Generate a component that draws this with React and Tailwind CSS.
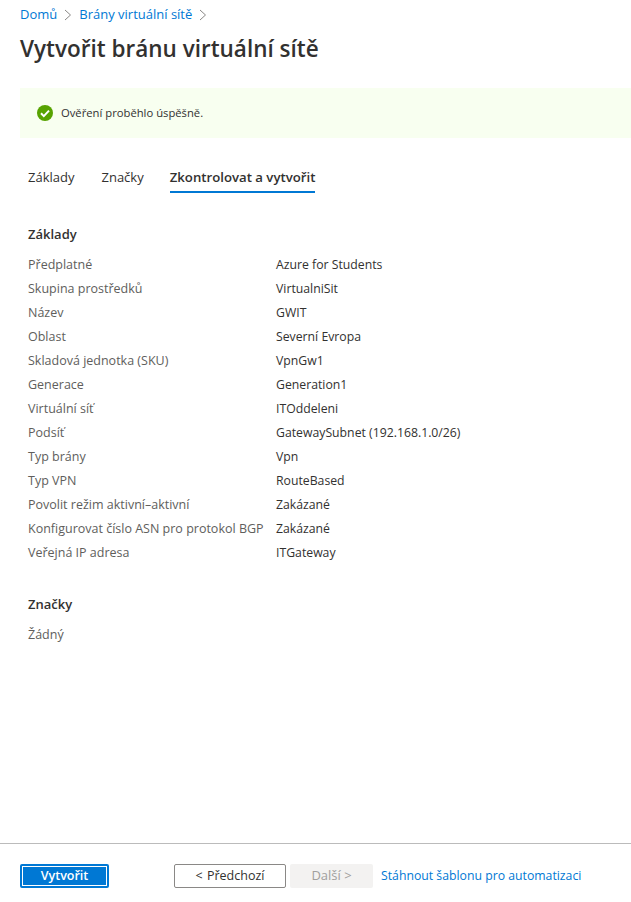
import React from 'react';

const rows = [
  ['Předplatné', 'Azure for Students'],
  ['Skupina prostředků', 'VirtualniSit'],
  ['Název', 'GWIT'],
  ['Oblast', 'Severní Evropa'],
  ['Skladová jednotka (SKU)', 'VpnGw1'],
  ['Generace', 'Generation1'],
  ['Virtuální síť', 'ITOddeleni'],
  ['Podsíť', 'GatewaySubnet (192.168.1.0/26)'],
  ['Typ brány', 'Vpn'],
  ['Typ VPN', 'RouteBased'],
  ['Povolit režim aktivní–aktivní', 'Zakázané'],
  ['Konfigurovat číslo ASN pro protokol BGP', 'Zakázané'],
  ['Veřejná IP adresa', 'ITGateway'],
];

const Chevron = () => (
  <svg width="8" height="12" viewBox="0 0 8 12" fill="none" stroke="#8a8886" strokeWidth="1" className="mx-[7px]">
    <path d="M1 1l5.5 5L1 11" />
  </svg>
);

export default function App() {
  return (
    <div className="relative h-[902px] w-[631px] overflow-hidden bg-white font-['Open_Sans',sans-serif] text-[12.5px] text-[#323130]">
      <div className="pl-5 pt-[6px]">
        <div className="flex h-[18px] items-center text-[13px] text-[#0078d4]">
          <span>Domů</span>
          <Chevron />
          <span>Brány virtuální sítě</span>
          <Chevron />
        </div>
        <h1 className="mt-[8px] text-[22.5px] font-semibold leading-[34px]">Vytvořit bránu virtuální sítě</h1>
      </div>

      <div className="ml-5 mt-[22px] flex h-[50px] items-center bg-[#f8fff0] pl-[17px]">
        <svg width="16" height="16" viewBox="0 0 16 16">
          <circle cx="8" cy="8" r="8" fill="#57a300" />
          <path d="M4 8.3l2.8 2.8L12 5.6" fill="none" stroke="#fff" strokeWidth="2" />
        </svg>
        <span className="ml-2 pt-[1px] text-[11.25px]">Ověření proběhlo úspěšně.</span>
      </div>

      <div className="ml-7 mt-[26px] flex h-[29px] gap-[26px] text-[13px]">
        <span className="leading-[26px]">Základy</span>
        <span className="ml-[1px] leading-[26px]">Značky</span>
        <span className="border-b-2 border-[#0078d4] text-[13.2px] font-semibold leading-[26px]">Zkontrolovat a vytvořit</span>
      </div>

      <div className="ml-7 mt-[31px] text-[13px] font-semibold leading-[20px]">Základy</div>
      <div className="ml-7 mt-[9px]">
        {rows.map(([label, value]) => (
          <div key={label} className="flex h-6 items-center">
            <span className="w-[248px] text-[#605e5c]">{label}</span>
            <span className="text-[12.25px]">{value}</span>
          </div>
        ))}
      </div>

      <div className="ml-7 mt-[29px] text-[13px] font-semibold leading-[20px]">Značky</div>
      <div className="ml-7 mt-[9px] flex h-6 items-center text-[#605e5c]">Žádný</div>

      <div className="absolute bottom-0 left-0 right-0 flex h-[59px] items-start border-t border-[#bbb] pl-5 pt-5">
        <button className="h-6 w-[89px] rounded-[2px] border-2 border-[#0078d4] bg-[#0078d4] font-semibold leading-none text-white outline outline-1 -outline-offset-3 outline-white">
          Vytvořit
        </button>
        <button className="ml-[65px] h-6 w-[112px] rounded-[2px] border border-[#8a8886] bg-white">
          &lt; <span className="ml-[1px]">Předchozí</span>
        </button>
        <button className="ml-[4px] h-6 w-[83px] rounded-[2px] bg-[#f3f2f1] text-[13px] text-[#a19f9d]">Další &gt;</button>
        <span className="ml-2 text-[12.25px] leading-6 text-[#0078d4]">Stáhnout šablonu pro automatizaci</span>
      </div>
    </div>
  );
}
